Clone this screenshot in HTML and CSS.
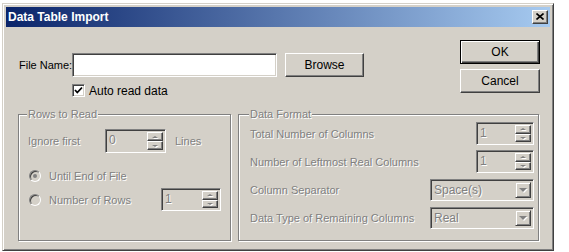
FILE: index.html
```html
<!DOCTYPE html>
<html>
<head>
<meta charset="utf-8">
<link rel="stylesheet" href="styles.css">
</head>
<body>
<div class="dialog">
  <div class="titlebar">
    <span class="title">Data Table Import</span>
    <span class="close"><svg width="8" height="7" viewBox="0 0 8 7"><path d="M0.5 0.5 L7.5 6.5 M7.5 0.5 L0.5 6.5" stroke="#000" stroke-width="1.6" fill="none"/></svg></span>
  </div>
  <div class="body">
    <div class="top">
      <div class="fields">
        <div class="file-row">
          <span class="file-label">File Name:</span>
          <span class="input"></span>
          <span class="btn browse">Browse</span>
        </div>
        <div class="check-row">
          <span class="checkbox"><svg width="9" height="9" viewBox="0 0 9 9"><path d="M1 4 L3.3 6.5 L8 1.5" stroke="#000" stroke-width="1.8" fill="none"/></svg></span>
          <span class="check-label">Auto read data</span>
        </div>
      </div>
      <div class="actions">
        <span class="btn default">OK</span>
        <span class="btn">Cancel</span>
      </div>
    </div>
    <div class="groups">
      <fieldset class="group rows">
        <legend class="dis">Rows to Read</legend>
        <div class="ignore-row">
          <span class="dis ignore-label">Ignore first</span>
          <span class="spin w61"><span class="spin-val dis">0</span><span class="spin-btns"><span class="sb"><i class="ar up"></i></span><span class="sb"><i class="ar down"></i></span></span></span>
          <span class="dis lines">Lines</span>
        </div>
        <div class="radio-row first">
          <span class="radio-item"><span class="radio on"></span><span class="dis">Until End of File</span></span>
        </div>
        <div class="radio-row second">
          <span class="radio-item"><span class="radio"></span><span class="dis">Number of Rows</span></span>
          <span class="spin w60"><span class="spin-val dis">1</span><span class="spin-btns"><span class="sb"><i class="ar up"></i></span><span class="sb"><i class="ar down"></i></span></span></span>
        </div>
      </fieldset>
      <fieldset class="group format">
        <legend class="dis">Data Format</legend>
        <div class="fmt-grid">
          <span class="dis">Total Number of Columns</span>
          <span class="spin w58"><span class="spin-val dis">1</span><span class="spin-btns"><span class="sb"><i class="ar up"></i></span><span class="sb"><i class="ar down"></i></span></span></span>
          <span class="dis">Number of Leftmost Real Columns</span>
          <span class="spin w58"><span class="spin-val dis">1</span><span class="spin-btns"><span class="sb"><i class="ar up"></i></span><span class="sb"><i class="ar down"></i></span></span></span>
          <span class="dis">Column Separator</span>
          <span class="combo"><span class="combo-val dis">Space(s)</span><span class="drop"><i class="ar big"></i></span></span>
          <span class="dis">Data Type of Remaining Columns</span>
          <span class="combo"><span class="combo-val dis">Real</span><span class="drop"><i class="ar big"></i></span></span>
        </div>
      </fieldset>
    </div>
  </div>
</div>
</body>
</html>
```

FILE: styles.css
```css
* { box-sizing: border-box; }
html, body { margin: 0; background: #fff; }
body {
  font-family: "Liberation Sans", Arial, sans-serif;
  font-size: 11px;
  color: #000;
}
.dialog {
  margin: 3px 0 0 2px;
  width: 552px;
  height: 248px;
  background: #d4d0c8;
  border: 1px solid;
  border-color: #d4d0c8 #404040 #404040 #d4d0c8;
  box-shadow: inset 1px 1px #fff, inset -1px -1px #808080;
  padding: 3px;
  display: flex;
  flex-direction: column;
}
.titlebar {
  height: 20px;
  background: linear-gradient(to right, #0a246a, #a6caf0);
  display: flex;
  align-items: center;
  justify-content: space-between;
  padding: 0 2px 0 2px;
}
.title {
  color: #fff;
  font-weight: bold;
  font-size: 12px;
}
.close {
  width: 16px;
  height: 14px;
  background: #d4d0c8;
  border: 1px solid;
  border-color: #fff #404040 #404040 #fff;
  box-shadow: inset -1px -1px #808080;
  display: flex;
  align-items: center;
  justify-content: center;
}
.close svg { display: block; margin-top: -1px; }
.body {
  flex: 1;
  padding: 13px 10px 6px 12px;
  display: flex;
  flex-direction: column;
}
.top {
  height: 68px;
  display: flex;
  justify-content: space-between;
}
.fields { padding-top: 13px; padding-left: 1px; }
.file-row { display: flex; align-items: center; height: 24px; }
.file-label { width: 53px; flex-shrink: 0; white-space: nowrap; }
.input {
  width: 205px;
  flex-shrink: 0;
  height: 24px;
  background: #fff;
  border: 1px solid;
  border-color: #808080 #fff #fff #808080;
  box-shadow: inset 1px 1px #404040, inset -1px -1px #d4d0c8;
}
.btn {
  display: flex;
  align-items: center;
  justify-content: center;
  width: 80px;
  height: 24px;
  flex-shrink: 0;
  background: #d4d0c8;
  border: 1px solid;
  border-color: #fff #404040 #404040 #fff;
  box-shadow: inset -1px -1px #808080;
  font-size: 12px;
}
.btn.browse { width: 79px; margin-left: 8px; }
.btn.default {
  border: 1px solid #000;
  box-shadow: inset 1px 1px #fff, inset -1px -1px #404040, inset -2px -2px #808080;
}
.actions { display: flex; flex-direction: column; gap: 5px; }
.check-row { display: flex; align-items: center; height: 13px; margin-top: 7px; padding-left: 53px; }
.checkbox {
  width: 13px;
  height: 13px;
  background: #fff;
  border: 1px solid;
  border-color: #808080 #fff #fff #808080;
  box-shadow: inset 1px 1px #404040, inset -1px -1px #d4d0c8;
  display: flex;
  align-items: center;
  justify-content: center;
}
.checkbox svg { display: block; }
.check-label { margin-left: 4px; font-size: 12px; }
.dis { color: #808080; text-shadow: 1px 1px #fff; white-space: nowrap; }
.groups {
  flex: 1;
  display: grid;
  grid-template-columns: 213px 301px;
  column-gap: 7px;
}
.group {
  margin: 0;
  min-width: 0;
  border: 1px solid #808080;
  box-shadow: inset 1px 1px #fff, 1px 1px #fff;
}
.group legend {
  padding: 0 1px;
  margin-left: -1px;
  line-height: 13px;
  background: #d4d0c8;
}
.group.rows { padding: 8px 4px 0 9px; }
.group.format { padding: 1px 4px 0 11px; }
.ignore-row { display: flex; align-items: center; height: 24px; }
.ignore-label { width: 77px; }
.lines { margin-left: 9px; }
.radio-row { display: flex; align-items: center; }
.radio-row.first { margin-top: 16px; height: 14px; }
.radio-row.second { margin-top: 5px; height: 23px; }
.radio-item { display: flex; align-items: center; width: 133px; }
.radio {
  width: 12px;
  height: 12px;
  margin-left: 1px;
  margin-right: 8px;
  border-radius: 50%;
  border: 1px solid;
  border-color: #808080 #fff #fff #808080;
  box-shadow: inset 1px 1px #404040, inset -1px -1px #d4d0c8;
  background: #d4d0c8;
  position: relative;
}
.radio.on::after {
  content: "";
  position: absolute;
  left: 3px;
  top: 3px;
  width: 4px;
  height: 4px;
  border-radius: 50%;
  background: #808080;
}
.spin, .combo {
  display: flex;
  background: #d4d0c8;
  border: 1px solid;
  border-color: #808080 #fff #fff #808080;
  box-shadow: inset 1px 1px #404040, inset -1px -1px #d4d0c8;
  padding: 2px;
  height: 23px;
}
.spin.w61 { width: 61px; height: 24px; }
.spin.w60 { width: 60px; }
.spin.w58 { width: 58px; }
.spin-val, .combo-val { flex: 1; padding-left: 1px; font-size: 12px; line-height: 17px; }
.spin-btns { display: flex; flex-direction: column; width: 16px; }
.sb {
  flex: 1;
  background: #d4d0c8;
  border: 1px solid;
  border-color: #fff #404040 #404040 #fff;
  box-shadow: inset -1px -1px #808080;
  display: flex;
  align-items: center;
  justify-content: center;
}
.ar {
  display: block;
  width: 0;
  height: 0;
  border-left: 3px solid transparent;
  border-right: 3px solid transparent;
}
.ar.up { border-bottom: 2px solid #808080; filter: drop-shadow(1px 1px 0 #fff); }
.ar.down { border-top: 2px solid #808080; filter: drop-shadow(1px 1px 0 #fff); }
.ar.big {
  border-left-width: 4px;
  border-right-width: 4px;
  border-top: 4px solid #808080;
  filter: drop-shadow(1px 1px 0 #fff);
}
.fmt-grid {
  display: grid;
  grid-template-columns: 1fr auto;
  grid-auto-rows: 23px;
  row-gap: 5px;
  align-items: center;
}
.fmt-grid > span:nth-child(2n) { justify-self: end; }
.combo { width: 104px; height: 22px; }
.drop {
  width: 16px;
  background: #d4d0c8;
  border: 1px solid;
  border-color: #d4d0c8 #404040 #404040 #d4d0c8;
  box-shadow: inset 1px 1px #fff, inset -1px -1px #808080;
  display: flex;
  align-items: center;
  justify-content: center;
}
```
